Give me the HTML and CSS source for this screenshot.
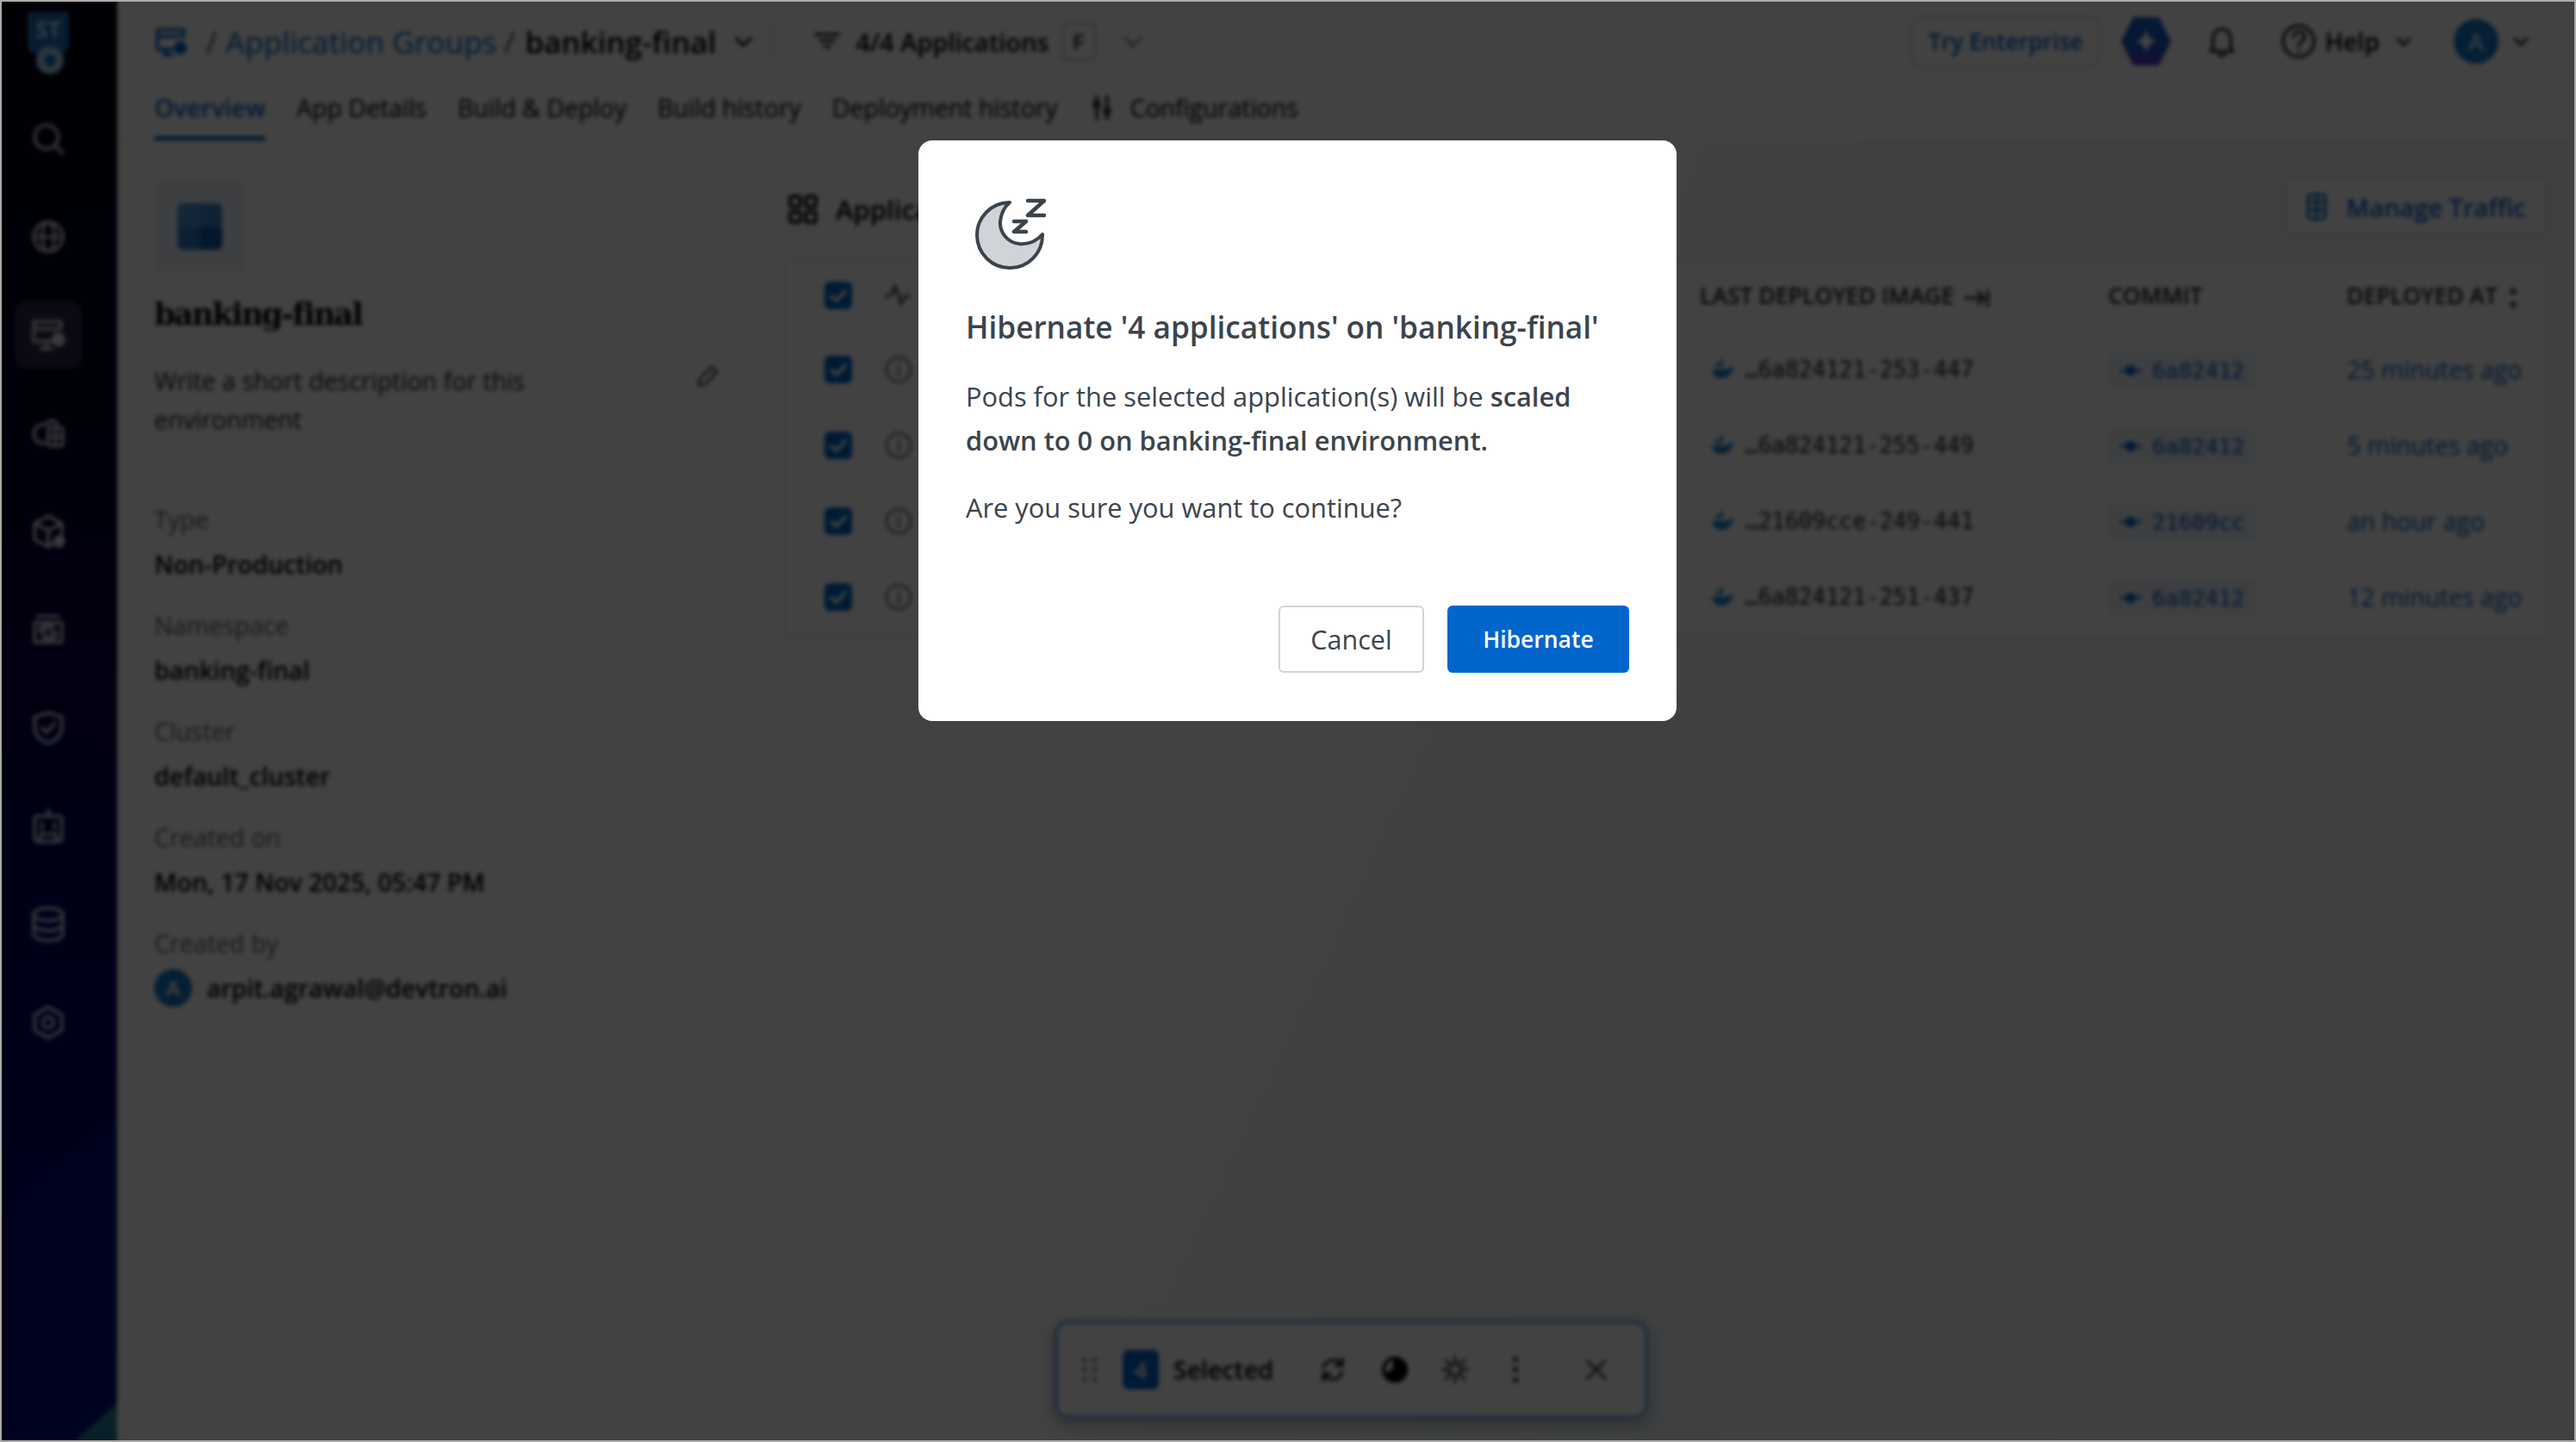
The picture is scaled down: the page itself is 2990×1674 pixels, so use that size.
FILE: index.html
```html
<!DOCTYPE html>
<html lang="en">
<head>
    <meta charset="UTF-8">
    <title>Application Groups - banking-final</title>
    <link rel="stylesheet" href="styles.css">
</head>
<body>

<div class="app">
    <nav class="sidebar">
        <svg class="logo" viewBox="0 0 52 76"><path d="M2 2h48v38c0 6-4 10-10 10H12C6 50 2 46 2 40z" fill="#1c6fb8"/><text x="26" y="32" class="logo-text">ST</text><circle cx="28" cy="58" r="16" fill="#a9d5f2"/><circle cx="28" cy="58" r="7" fill="#1c6fb8"/></svg>
        <a class="nav-item"><svg viewBox="0 0 40 40"><circle cx="18" cy="18" r="13"/><path d="M28 28l8 8"/></svg></a>
        <a class="nav-item"><svg viewBox="0 0 40 40"><circle cx="20" cy="20" r="16"/><ellipse cx="20" cy="20" rx="7" ry="16"/><path d="M4 20h32"/></svg></a>
        <a class="nav-item active"><svg viewBox="0 0 40 40"><path d="M34 12V5H4v22h18M4 13h28M12 35h12M18 28v7"/><circle cx="31" cy="25" r="6" fill="#fff"/></svg></a>
        <a class="nav-item"><svg viewBox="0 0 40 40"><path d="M18 10c-8 0-14 4-14 11s6 10 12 10"/><rect x="20" y="14" width="16" height="20" rx="2"/><path d="M20 24h16M28 14v20M18 10c3-5 9-5 12 0"/></svg></a>
        <a class="nav-item"><svg viewBox="0 0 40 40"><path d="M20 3l15 8v14M20 3L5 11v18l15 8 5-3M5 11l15 8 15-8M20 19v18"/><circle cx="32" cy="31" r="5" fill="#fff"/></svg></a>
        <a class="nav-item"><svg viewBox="0 0 40 40"><path d="M8 5h24M5 12h30v22H5z"/><circle cx="20" cy="23" r="5"/><path d="M11 23a9 9 0 0 1 15-7M29 23a9 9 0 0 1-15 7"/></svg></a>
        <a class="nav-item"><svg viewBox="0 0 40 40"><path d="M20 3l15 5v12c0 9-7 14-15 17C12 34 5 29 5 20V8z"/><path d="M13 20l5 5 9-10"/></svg></a>
        <a class="nav-item"><svg viewBox="0 0 40 40"><rect x="5" y="9" width="30" height="28" rx="3"/><path d="M20 2v7M13 17v6M27 17v6M11 29h18v8H11z"/></svg></a>
        <a class="nav-item"><svg viewBox="0 0 40 40"><ellipse cx="20" cy="9" rx="16" ry="7"/><path d="M4 9v22c0 4 7 7 16 7s16-3 16-7V9M4 20c0 4 7 7 16 7s16-3 16-7"/></svg></a>
        <a class="nav-item"><svg viewBox="0 0 40 40"><path d="M20 3l15 8.500v17L20 37 5 28.500v-17z"/><circle cx="20" cy="20" r="6"/></svg></a>
    </nav>

    <div class="main">
        <header class="top-header">
            <div class="title-row">
                <svg class="crumb-icon" viewBox="0 0 40 40"><path d="M36 14V6H4v24h18M4 14h28M12 37h10M14 30v7"/><circle cx="32" cy="28" r="6" class="blue-fill"/></svg>
                <span class="crumb-sep">/</span>
                <a class="crumb-link">Application Groups</a>
                <span class="crumb-sep">/</span>
                <strong class="crumb-current">banking-final</strong>
                <svg class="chev chev-crumb" viewBox="0 0 20 20"><path d="M3 7l7 7 7-7"/></svg>
                <span class="divider"></span>
                <svg class="filter-icon" viewBox="0 0 30 20"><path d="M1 2h28M7 9h16M12 16h6"/></svg>
                <span class="app-count">4/4 Applications</span>
                <span class="key-badge">F</span>
                <svg class="chev chev-faint" viewBox="0 0 20 20"><path d="M3 7l7 7 7-7"/></svg>
                <div class="header-right">
                    <button class="try-btn">Try Enterprise</button>
                    <svg class="ai-badge" viewBox="0 0 60 60"><defs><linearGradient id="aiFill" x1="0" y1="0" x2="0" y2="1"><stop offset="0" stop-color="#0f62d0"/><stop offset=".7" stop-color="#1a55c4"/><stop offset="1" stop-color="#6a2fd0"/></linearGradient></defs><path d="M15 2h30l14 28-14 28H15L1 30z" fill="url(#aiFill)"/><path d="M30 15c1 9 5 13 12 15-7 2-11 6-12 15-1-9-5-13-12-15 7-2 11-6 12-15z" fill="#fff"/></svg>
                    <svg class="bell" viewBox="0 0 34 40"><path d="M6 29V17c0-7 5-12 11-12s11 5 11 12v12l3 3H3zM13 36c2 3 6 3 8 0"/></svg>
                    <svg class="help-icon" viewBox="0 0 42 42"><circle cx="21" cy="21" r="18"/><path d="M15 16c0-8 13-8 13 0 0 5-7 5-7 10M21 31v1"/></svg>
                    <span class="help-label">Help</span>
                    <svg class="chev" viewBox="0 0 20 20"><path d="M3 7l7 7 7-7"/></svg>
                    <div class="user-box">
                        <span class="avatar avatar-lg">A</span>
                        <svg class="chev" viewBox="0 0 20 20"><path d="M3 7l7 7 7-7"/></svg>
                    </div>
                </div>
            </div>
            <div class="tabs">
                <a class="tab tab-active">Overview</a>
                <a class="tab">App Details</a>
                <a class="tab">Build &amp; Deploy</a>
                <a class="tab">Build history</a>
                <a class="tab">Deployment history</a>
                <a class="tab tab-config"><svg viewBox="0 0 24 30"><path d="M6 2v6M6 15v13M18 2v13M18 22v6"/><circle cx="6" cy="11" r="3"/><circle cx="18" cy="19" r="3"/></svg>Configurations</a>
            </div>
        </header>

        <div class="content">
            <aside class="env-panel">
                <div class="env-logo"><span class="env-logo-grid"><i></i><i></i><i></i><i></i></span></div>
                <h1 class="env-name">banking-final</h1>
                <div class="env-desc">
                    <p>Write a short description for this environment</p>
                    <svg viewBox="0 0 30 30"><path d="M5 25l1-7L20 4l6 6-14 14z"/></svg>
                </div>
                <dl class="meta">
                    <div class="meta-item"><dt>Type</dt><dd>Non-Production</dd></div>
                    <div class="meta-item"><dt>Namespace</dt><dd>banking-final</dd></div>
                    <div class="meta-item"><dt>Cluster</dt><dd>default_cluster</dd></div>
                    <div class="meta-item"><dt>Created on</dt><dd>Mon, 17 Nov 2025, 05:47 PM</dd></div>
                    <div class="meta-item"><dt>Created by</dt><dd class="created-by"><span class="avatar">A</span>arpit.agrawal@devtron.ai</dd></div>
                </dl>
            </aside>

            <section class="apps">
                <div class="apps-head">
                    <svg class="grid-icon" viewBox="0 0 32 32"><rect x="2" y="2" width="11" height="11" rx="2"/><rect x="19" y="2" width="11" height="11" rx="2"/><rect x="2" y="19" width="11" height="11" rx="2"/><rect x="19" y="19" width="11" height="11" rx="2"/></svg>
                    <h2>Applications</h2>
                    <button class="traffic-btn"><svg viewBox="0 0 24 32"><rect x="2" y="2" width="20" height="28" rx="4"/><path d="M2 11h20M2 20h20M12 2v28"/></svg>Manage Traffic</button>
                </div>
                <div class="app-table">
                    <div class="table-row table-header">
                        <span class="check"><svg viewBox="0 0 32 32"><path d="M8 17l6 5 10-11"/></svg></span>
                        <span class="status-cell"><svg class="pulse" viewBox="0 0 30 30"><path d="M1 16l6-1 5-11 7 21 4-9h6"/></svg></span>
                        <span class="col-image">LAST DEPLOYED IMAGE <svg viewBox="0 0 30 24"><path d="M2 12h22M17 5l7 7-7 7M28 3v18"/></svg></span>
                        <span class="col-commit">COMMIT</span>
                        <span class="col-date">DEPLOYED AT <svg viewBox="0 0 14 30"><path d="M7 2l5 8H2zM7 28l5-8H2z"/></svg></span>
                    </div>
                    <div class="table-row">
                        <span class="check"><svg viewBox="0 0 32 32"><path d="M8 17l6 5 10-11"/></svg></span>
                        <span class="status-cell"><svg class="info" viewBox="0 0 32 32"><circle cx="16" cy="16" r="14"/><path d="M16 14v9M16 9v1"/></svg></span>
                        <span class="col-image"><span class="image-chip"><svg viewBox="0 0 28 22"><path d="M2 11h19c1-3 3-4 6-3-1 6-6 13-14 13C7 21 3 17 2 11zM6 4h4v4H6zM11 4h4v4h-4zM11 0h4v3h-4z"/></svg>…6a824121-253-447</span></span>
                        <span class="col-commit"><span class="commit-chip"><svg viewBox="0 0 26 16"><circle cx="13" cy="8" r="4.500"/><path d="M2 8h22"/></svg>6a82412</span></span>
                        <span class="col-date date-text">25 minutes ago</span>
                    </div>
                    <div class="table-row">
                        <span class="check"><svg viewBox="0 0 32 32"><path d="M8 17l6 5 10-11"/></svg></span>
                        <span class="status-cell"><svg class="info" viewBox="0 0 32 32"><circle cx="16" cy="16" r="14"/><path d="M16 14v9M16 9v1"/></svg></span>
                        <span class="col-image"><span class="image-chip"><svg viewBox="0 0 28 22"><path d="M2 11h19c1-3 3-4 6-3-1 6-6 13-14 13C7 21 3 17 2 11zM6 4h4v4H6zM11 4h4v4h-4zM11 0h4v3h-4z"/></svg>…6a824121-255-449</span></span>
                        <span class="col-commit"><span class="commit-chip"><svg viewBox="0 0 26 16"><circle cx="13" cy="8" r="4.500"/><path d="M2 8h22"/></svg>6a82412</span></span>
                        <span class="col-date date-text">5 minutes ago</span>
                    </div>
                    <div class="table-row">
                        <span class="check"><svg viewBox="0 0 32 32"><path d="M8 17l6 5 10-11"/></svg></span>
                        <span class="status-cell"><svg class="info" viewBox="0 0 32 32"><circle cx="16" cy="16" r="14"/><path d="M16 14v9M16 9v1"/></svg></span>
                        <span class="col-image"><span class="image-chip"><svg viewBox="0 0 28 22"><path d="M2 11h19c1-3 3-4 6-3-1 6-6 13-14 13C7 21 3 17 2 11zM6 4h4v4H6zM11 4h4v4h-4zM11 0h4v3h-4z"/></svg>…21609cce-249-441</span></span>
                        <span class="col-commit"><span class="commit-chip"><svg viewBox="0 0 26 16"><circle cx="13" cy="8" r="4.500"/><path d="M2 8h22"/></svg>21609cc</span></span>
                        <span class="col-date date-text">an hour ago</span>
                    </div>
                    <div class="table-row">
                        <span class="check"><svg viewBox="0 0 32 32"><path d="M8 17l6 5 10-11"/></svg></span>
                        <span class="status-cell"><svg class="info" viewBox="0 0 32 32"><circle cx="16" cy="16" r="14"/><path d="M16 14v9M16 9v1"/></svg></span>
                        <span class="col-image"><span class="image-chip"><svg viewBox="0 0 28 22"><path d="M2 11h19c1-3 3-4 6-3-1 6-6 13-14 13C7 21 3 17 2 11zM6 4h4v4H6zM11 4h4v4h-4zM11 0h4v3h-4z"/></svg>…6a824121-251-437</span></span>
                        <span class="col-commit"><span class="commit-chip"><svg viewBox="0 0 26 16"><circle cx="13" cy="8" r="4.500"/><path d="M2 8h22"/></svg>6a82412</span></span>
                        <span class="col-date date-text">12 minutes ago</span>
                    </div>
                </div>
            </section>
        </div>
    </div>

    <!-- floating bar for the selected rows -->
    <div class="selection-bar">
        <svg class="drag" viewBox="0 0 20 30"><circle cx="4" cy="4" r="2.500"/><circle cx="16" cy="4" r="2.500"/><circle cx="4" cy="15" r="2.500"/><circle cx="16" cy="15" r="2.500"/><circle cx="4" cy="26" r="2.500"/><circle cx="16" cy="26" r="2.500"/></svg>
        <span class="count">4</span>
        <span class="selected-label">Selected</span>
        <svg class="bar-icon restart" viewBox="0 0 32 32"><path d="M5 14c2-10 16-12 21-4M27 18c-2 10-16 12-21 4M27 3v8h-8M5 29v-8h8"/></svg>
        <svg class="bar-icon hibernate" viewBox="0 0 32 32"><circle cx="16" cy="16" r="13"/><path d="M16 16V3a13 13 0 1 1-11 20z" class="bar-fill"/></svg>
        <svg class="bar-icon sun" viewBox="0 0 32 32"><circle cx="16" cy="16" r="7"/><path d="M16 1v5M16 26v5M1 16h5M26 16h5M5 5l4 4M23 23l4 4M27 5l-4 4M9 23l-4 4"/></svg>
        <svg class="bar-icon more" viewBox="0 0 8 32"><circle cx="4" cy="4" r="3"/><circle cx="4" cy="16" r="3"/><circle cx="4" cy="28" r="3"/></svg>
        <svg class="bar-icon close" viewBox="0 0 24 24"><path d="M2 2l20 20M22 2L2 22"/></svg>
    </div>

    <div class="overlay">
        <div class="modal">
            <svg class="moon" viewBox="21 8 100 100"><path class="moon-body" d="M72 25A38 38 0 1 0 110 62C103 70 93 74 83 73C70 72 60 60 61 47C62 38 66 30 72 25Z"/><path class="moon-z" d="M93 23h19L93 40h19M77 47h14L77 59h14"/></svg>
            <h3 class="modal-title">Hibernate '4 applications' on 'banking-final'</h3>
            <p class="modal-text">Pods for the selected application(s) will be <b>scaled</b> <b>down to 0 on banking-final environment.</b></p>
            <p class="modal-text modal-question">Are you sure you want to continue?</p>
            <div class="modal-actions">
                <button class="btn-cancel">Cancel</button>
                <button class="btn-primary">Hibernate</button>
            </div>
        </div>
    </div>
</div>

</body>
</html>
```

FILE: styles.css
```css
* {
    box-sizing: border-box;
}
html, body {
    margin: 0;
    height: 100%;
}
body {
    background: #ababab;
    padding: 2px;
    font-family: "Open Sans", "Noto Sans", sans-serif;
    color: #000;
    overflow: hidden;
}
svg {
    fill: none;
    stroke: currentColor;
    stroke-width: 3;
    stroke-linecap: round;
    stroke-linejoin: round;
    flex: none;
}
p, h1, h2, h3, dl, dd {
    margin: 0;
}
button {
    font-family: inherit;
}
.app {
    position: relative;
    display: flex;
    width: 2986px;
    height: 1670px;
    overflow: hidden;
    background: #fff;
}

/* sidebar */
.sidebar {
    width: 134px;
    flex: none;
    display: flex;
    flex-direction: column;
    align-items: center;
    padding: 10px 26px 0 0;
    color: #fff;
    background:
        linear-gradient(138deg, transparent 97.6%, #2a7d9c 97.6%),
        linear-gradient(140deg, transparent 79%, rgba(0, 50, 130, .3) 79%),
        linear-gradient(180deg, #00000f 0%, #000038 40%, #000068 75%, #000074 100%);
}
.logo {
    width: 52px;
    height: 76px;
    stroke: none;
    margin-bottom: 34px;
}
.logo-text {
    font-size: 26px;
    font-weight: 700;
    fill: #bfe3ff;
    text-anchor: middle;
}
.nav-item {
    width: 78px;
    height: 78px;
    margin-bottom: 36px;
    display: flex;
    align-items: center;
    justify-content: center;
    border-radius: 14px;
}
.nav-item svg {
    width: 42px;
    height: 42px;
    stroke-width: 3.500;
    opacity: .85;
}
.nav-item.active {
    background: rgba(255, 255, 255, .16);
}

/* header */
.main {
    flex: 1;
    min-width: 0;
    display: flex;
    flex-direction: column;
}
.top-header {
    height: 163px;
    flex: none;
    padding-left: 43px;
    border-bottom: 2px solid #eef0f2;
}
.title-row {
    height: 92px;
    display: flex;
    align-items: center;
}
.crumb-icon {
    width: 38px;
    height: 38px;
    color: #0066cc;
    margin-right: 22px;
    stroke-width: 4;
}
.blue-fill {
    fill: #0066cc;
}
.crumb-sep {
    font-size: 35px;
    color: #555;
    margin-right: 10px;
}
.crumb-link {
    font-size: 35.300px;
    color: #0066cc;
    margin-right: 8px;
}
.crumb-current {
    font-size: 35px;
    font-weight: 600;
    margin-left: 2px;
}
.chev {
    width: 20px;
    height: 20px;
    stroke-width: 2.500;
}
.chev-crumb {
    margin-left: 20px;
    width: 24px;
    height: 24px;
}
.divider {
    width: 2px;
    height: 44px;
    background: #e4e7ea;
    margin: 0 48px 0 20px;
}
.filter-icon {
    width: 30px;
    height: 20px;
    margin-right: 18px;
}
.app-count {
    font-size: 29px;
    font-weight: 600;
}
.key-badge {
    width: 40px;
    height: 44px;
    margin-left: 14px;
    border: 2px solid #b4b9c0;
    border-radius: 6px;
    font-size: 26px;
    font-weight: 600;
    color: #222;
    display: flex;
    align-items: center;
    justify-content: center;
}
.chev-faint {
    margin-left: 30px;
    color: #8a8f96;
    width: 26px;
    height: 26px;
}
.header-right {
    margin-left: auto;
    display: flex;
    align-items: center;
    padding-right: 42px;
}
.try-btn {
    width: 219px;
    height: 60px;
    border: 2px solid #d8dce0;
    border-radius: 8px;
    background: #fff;
    color: #0066cc;
    font-size: 26.500px;
    font-weight: 600;
    padding: 0;
}
.ai-badge {
    width: 60px;
    height: 60px;
    stroke: none;
    margin-left: 24px;
}
.bell {
    width: 32px;
    height: 38px;
    margin-left: 42px;
}
.help-icon {
    width: 42px;
    height: 42px;
    margin-left: 52px;
}
.help-label {
    font-size: 28.500px;
    font-weight: 600;
    margin: 0 18px 0 9px;
}
.user-box {
    display: flex;
    align-items: center;
    gap: 16px;
    margin-left: 38px;
    padding: 0 10px;
}
.avatar {
    width: 44px;
    height: 44px;
    flex: none;
    border-radius: 50%;
    background: #1578c8;
    color: #fff;
    font-size: 24px;
    display: flex;
    align-items: center;
    justify-content: center;
}
.avatar-lg {
    width: 52px;
    height: 52px;
    font-size: 28px;
}
.tabs {
    display: flex;
    gap: 36px;
}
.tab {
    height: 69px;
    font-size: 28.500px;
    line-height: 62px;
    color: #000;
    border-bottom: 5px solid transparent;
    display: flex;
    align-items: flex-start;
}
.tab-active {
    color: #0066cc;
    font-weight: 600;
    border-bottom-color: #0066cc;
}
.tab-config svg {
    width: 24px;
    height: 30px;
    margin: 16px 20px 0 4px;
}

/* content */
.content {
    flex: 1;
    display: flex;
    min-height: 0;
    background: linear-gradient(115deg, #fff 30%, #fff 45%, #edf5fa 70%, #eff6fa 100%);
}
.env-panel {
    width: 744px;
    flex: none;
    padding: 45px 0 0 43px;
    background: #fff;
}
.env-logo {
    width: 106px;
    height: 106px;
    border-radius: 8px;
    background: #eaf1f9;
    display: flex;
    align-items: center;
    justify-content: center;
}
.env-logo-grid {
    width: 52px;
    height: 54px;
    display: grid;
    grid-template-columns: 1fr 1fr;
    border-radius: 6px;
    overflow: hidden;
}
.env-logo-grid i:nth-child(1) {
    background: #4c96da;
}
.env-logo-grid i:nth-child(2) {
    background: #3e88d0;
}
.env-logo-grid i:nth-child(3) {
    background: #2f7ac4;
}
.env-logo-grid i:nth-child(4) {
    background: #0f5cab;
}
.env-name {
    margin-top: 19px;
    font-family: "DejaVu Serif", serif;
    font-size: 35px;
    line-height: 60px;
    font-weight: 700;
    letter-spacing: -1.800px;
}
.env-desc {
    margin-top: 25px;
    width: 657px;
    display: flex;
    justify-content: space-between;
    color: #222;
}
.env-desc p {
    width: 480px;
    font-size: 28.500px;
    line-height: 45px;
}
.env-desc svg {
    width: 30px;
    height: 30px;
    margin-top: 2px;
    color: #555;
}
.meta {
    margin-top: 67px;
}
.meta-item {
    height: 123px;
}
.meta-item dt {
    font-size: 28.500px;
    line-height: 52px;
    color: #666;
}
.meta-item dd {
    font-size: 28.500px;
    line-height: 52px;
    font-weight: 600;
}
.created-by {
    display: flex;
    align-items: center;
    gap: 17px;
}
.apps {
    flex: 1;
    min-width: 0;
    padding: 0 32px 0 30px;
}
.apps-head {
    height: 138px;
    display: flex;
    align-items: center;
    padding-top: 18px;
}
.grid-icon {
    width: 34px;
    height: 34px;
    margin: 0 21px 0 5px;
    stroke-width: 3.500;
}
.apps-head h2 {
    font-size: 31px;
    font-weight: 600;
}
.traffic-btn {
    margin-left: auto;
    width: 303px;
    height: 66px;
    margin-top: -6px;
    background: #fff;
    border: 2px solid #d8dce0;
    border-radius: 8px;
    color: #0066cc;
    font-size: 29px;
    font-weight: 600;
    display: flex;
    align-items: center;
    justify-content: center;
    gap: 22px;
    padding: 0;
}
.traffic-btn svg {
    width: 24px;
    height: 32px;
}
.app-table {
    background: #fff;
    border: 2px solid #e4e7ea;
    border-radius: 8px;
    padding-bottom: 1px;
}
.table-row {
    height: 88px;
    display: grid;
    grid-template-columns: 70px 946px 474px 277px 1fr;
    align-items: center;
    padding-left: 45px;
    font-size: 28.400px;
}
.table-header {
    height: 76px;
    margin-bottom: 4px;
    font-size: 26.500px;
    font-weight: 600;
    color: #222;
}
.check {
    width: 32px;
    height: 32px;
    border-radius: 6px;
    background: #0066cc;
    color: #fff;
    display: flex;
}
.check svg {
    width: 32px;
    height: 32px;
    stroke-width: 4;
}
.status-cell {
    color: #444;
    display: flex;
}
.pulse {
    width: 30px;
    height: 30px;
}
.info {
    width: 32px;
    height: 32px;
    stroke-width: 2.500;
    color: #666;
}
.col-image svg, .col-date svg {
    vertical-align: middle;
    margin-left: 4px;
}
.col-image svg {
    width: 30px;
    height: 24px;
}
.col-date svg {
    width: 14px;
    height: 30px;
    fill: #333;
    stroke: none;
}
.image-chip {
    display: inline-flex;
    align-items: center;
    gap: 12px;
    height: 44px;
    margin-left: 12px;
    font-family: "DejaVu Sans Mono", monospace;
    font-size: 26px;
    color: #222;
    white-space: nowrap;
}
.image-chip svg {
    width: 28px;
    height: 22px;
    margin: 0;
    fill: #0f7fd0;
    stroke: none;
}
.commit-chip {
    display: inline-flex;
    align-items: center;
    gap: 12px;
    width: 171px;
    height: 42px;
    padding-left: 13px;
    border-radius: 6px;
    background: #edf3fb;
    color: #0066cc;
    font-family: "DejaVu Sans Mono", monospace;
    font-size: 25.500px;
}
.commit-chip svg {
    width: 26px;
    height: 16px;
    fill: #0066cc;
}
.date-text {
    color: #0066cc;
}

/* selection bar sits on top of the page */
.selection-bar {
    position: absolute;
    left: 1222px;
    top: 1531px;
    width: 689px;
    height: 114px;
    display: flex;
    align-items: center;
    padding-left: 27px;
    background: #fff;
    border: 4px solid #7fb2f5;
    border-radius: 16px;
    box-shadow: 0 6px 20px rgba(0, 0, 0, .3);
}
.drag {
    width: 20px;
    height: 30px;
    fill: #666;
    stroke: none;
}
.count {
    width: 42px;
    height: 46px;
    margin-left: 28px;
    border-radius: 7px;
    background: #0066cc;
    color: #fff;
    font-size: 26px;
    font-weight: 600;
    display: flex;
    align-items: center;
    justify-content: center;
}
.selected-label {
    margin-left: 17px;
    width: 116px;
    font-size: 28.500px;
    font-weight: 600;
}
.bar-icon {
    width: 32px;
    height: 32px;
}
.restart {
    margin-left: 53px;
}
.hibernate {
    margin-left: 40px;
    stroke-width: 4;
}
.bar-fill {
    fill: #000;
}
.sun {
    margin-left: 38px;
    color: #333;
}
.more {
    margin-left: 50px;
    width: 8px;
    fill: #222;
    stroke: none;
}
.close {
    margin-left: 78px;
    width: 24px;
    height: 24px;
    color: #333;
}

/* modal */
.overlay {
    position: absolute;
    top: 0;
    left: 0;
    right: 0;
    bottom: 0;
    background: rgba(0, 0, 0, .74);
    backdrop-filter: blur(2.500px);
}
.modal {
    width: 880px;
    height: 674px;
    margin: 161px 0 0 1064px;
    padding: 55px;
    background: #fff;
    border-radius: 16px;
    color: #3b444c;
}
.moon {
    display: block;
    width: 100px;
    height: 100px;
}
.moon-body {
    fill: #d0d4d9;
    stroke: #3b444c;
    stroke-width: 4;
}
.moon-z {
    stroke: #3b444c;
    stroke-width: 4.500;
}
.modal-title {
    margin-top: 34px;
    font-size: 35.200px;
    line-height: 54px;
    font-weight: 600;
}
.modal-text {
    margin-top: 29px;
    font-size: 30.800px;
    line-height: 51px;
}
.modal-text b {
    font-weight: 600;
}
.modal-question {
    margin-top: 27px;
}
.modal-actions {
    margin-top: 88px;
    display: flex;
    justify-content: flex-end;
    gap: 27px;
}
.btn-cancel {
    width: 169px;
    height: 78px;
    background: #fff;
    border: 2px solid #d0d4d9;
    border-radius: 6px;
    color: #3b444c;
    font-size: 30.500px;
    padding: 0;
}
.btn-primary {
    width: 211px;
    height: 78px;
    background: #0066cc;
    border: 0;
    border-radius: 6px;
    color: #fff;
    font-size: 26.500px;
    font-weight: 600;
    padding: 0;
}
```
